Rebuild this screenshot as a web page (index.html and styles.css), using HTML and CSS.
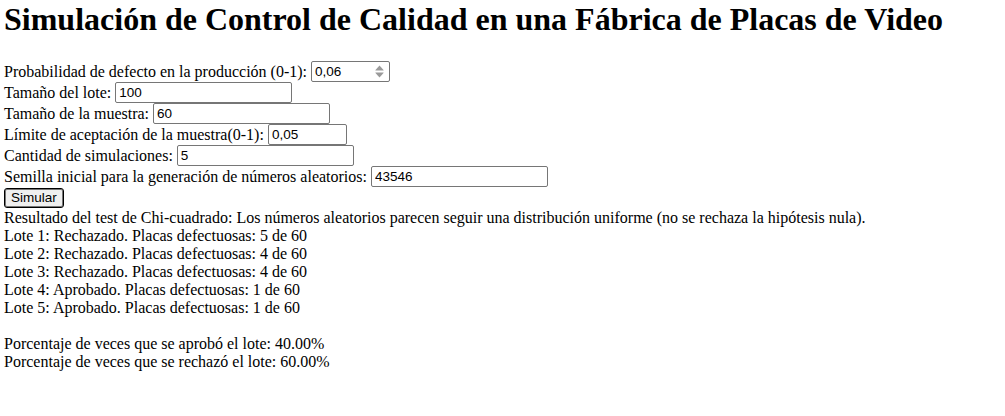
FILE: index.html
```html
<!DOCTYPE html>
<html lang="es">
<head>
<meta charset="utf-8">
<title>Simulación de Control de Calidad</title>
<link rel="stylesheet" href="styles.css">
</head>
<body>
<h1 class="title">Simulación de Control de Calidad en una Fábrica de Placas de Video</h1>
<form class="form">
  <div class="row"><label>Probabilidad de defecto en la producción (0-1): </label><span class="field field-narrow field-spin"><input class="inner" type="text" value="0,06"><svg class="spin" width="11" height="15" viewBox="0 0 11 15"><path d="M5.5 1.5 L9.5 6 Q10 6.6 9.3 6.6 L1.7 6.6 Q1 6.6 1.5 6 Z" fill="#9a9a9a"/><path d="M5.5 13.5 L9.5 9 Q10 8.4 9.3 8.4 L1.7 8.4 Q1 8.4 1.5 9 Z" fill="#9a9a9a"/></svg></span></div>
  <div class="row"><label>Tamaño del lote: </label><input class="field" type="text" value="100"></div>
  <div class="row"><label>Tamaño de la muestra: </label><input class="field" type="text" value="60"></div>
  <div class="row"><label>Límite de aceptación de la muestra(0-1): </label><input class="field field-narrow" type="text" value="0,05"></div>
  <div class="row"><label>Cantidad de simulaciones: </label><input class="field" type="text" value="5"></div>
  <div class="row"><label>Semilla inicial para la generación de números aleatorios: </label><input class="field" type="text" value="43546"></div>
  <div class="row"><button class="btn" type="button">Simular</button></div>
</form>
<div class="results">
  <div>Resultado del test de Chi-cuadrado: Los números aleatorios parecen seguir una distribución uniforme (no se rechaza la hipótesis nula).</div>
  <div>Lote 1: Rechazado. Placas defectuosas: 5 de 60</div>
  <div>Lote 2: Rechazado. Placas defectuosas: 4 de 60</div>
  <div>Lote 3: Rechazado. Placas defectuosas: 4 de 60</div>
  <div>Lote 4: Aprobado. Placas defectuosas: 1 de 60</div>
  <div>Lote 5: Aprobado. Placas defectuosas: 1 de 60</div>
  <div class="gap">Porcentaje de veces que se aprobó el lote: 40.00%</div>
  <div>Porcentaje de veces que se rechazó el lote: 60.00%</div>
</div>
</body>
</html>
```

FILE: styles.css
```css
html, body {
  background: #fff;
}
body {
  margin: 0 4px;
  font-family: "Liberation Serif", "Times New Roman", serif;
  font-size: 16px;
  color: #000;
}
.title {
  font-size: 32px;
  font-weight: bold;
  margin: 0 0 23px 0;
  padding-top: 1px;
  line-height: 37px;
}
.form {
  margin: 0;
}
.row {
  height: 21px;
  display: flex;
  align-items: center;
  white-space: pre;
}
.field {
  box-sizing: border-box;
  width: 177px;
  height: 21px;
  font-family: "Liberation Sans", Arial, sans-serif;
  font-size: 13.5px;
  color: #000;
  border: 1px solid #767676;
  border-radius: 2px;
  padding: 1px 3px;
  margin: 0;
  background: #fff;
  outline: none;
}
.field-narrow {
  width: 79px;
}
.field-spin {
  display: inline-flex;
  align-items: center;
  padding: 0 4px 0 3px;
}
.inner {
  border: 0;
  padding: 0;
  margin: 0;
  width: 50px;
  flex: 1;
  font: inherit;
  outline: none;
  background: transparent;
}
.spin {
  display: block;
}
.btn {
  box-sizing: border-box;
  height: 20px;
  font-family: "Liberation Sans", Arial, sans-serif;
  font-size: 13.5px;
  padding: 0 6px;
  margin: 0;
  border: 1px solid #000;
  border-radius: 3px;
  background: #efefef;
  color: #000;
  box-shadow: inset 0 0 0 1px #767676;
}
.results {
  line-height: 18px;
  padding-top: 1px;
}
.gap {
  margin-top: 18px;
}
```
